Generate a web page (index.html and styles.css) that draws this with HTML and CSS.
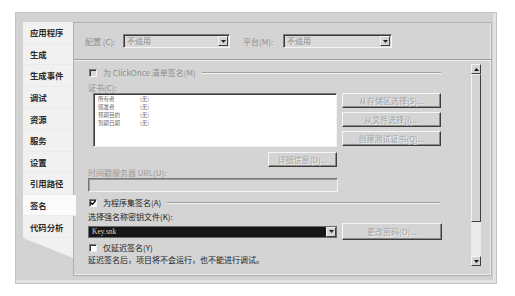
FILE: index.html
```html
<!DOCTYPE html>
<html>
<head>
<meta charset="utf-8">
<link rel="stylesheet" href="styles.css">
</head>
<body>
<div class="window">
  <div class="tabs">
    <div class="tab">应用程序</div>
    <div class="tab">生成</div>
    <div class="tab">生成事件</div>
    <div class="tab">调试</div>
    <div class="tab">资源</div>
    <div class="tab">服务</div>
    <div class="tab">设置</div>
    <div class="tab">引用路径</div>
    <div class="tab active">签名</div>
    <div class="tab">代码分析</div>
    <div class="tab-slant"></div>
  </div>
  <div class="panel">
    <div class="topbar">
      <span class="lbl dis lbl-cfg">配置 (C):</span>
      <div class="combo dis-combo c1"><span class="combo-text">不适用</span><span class="dd"><svg width="5" height="3" viewBox="0 0 5 3"><path d="M0 0H5L2.5 3Z" fill="#222"/></svg></span></div>
      <span class="lbl dis lbl-plat">平台(M):</span>
      <div class="combo dis-combo c2"><span class="combo-text">不适用</span><span class="dd"><svg width="5" height="3" viewBox="0 0 5 3"><path d="M0 0H5L2.5 3Z" fill="#222"/></svg></span></div>
    </div>
    <div class="sep"></div>
    <div class="scrollarea">
      <div class="form">
        <div class="chkrow">
          <span class="cb cb-dis"></span>
          <span class="txt dis">为 ClickOnce 清单签名(M)</span>
          <span class="gline gl1"></span>
        </div>
        <div class="lblrow dis">证书(C):</div>
        <div class="certrow">
          <div class="certbox">
            <div class="certline"><span class="ck">所有者</span><span>(无)</span></div>
            <div class="certline"><span class="ck">颁发者</span><span>(无)</span></div>
            <div class="certline"><span class="ck">预期目的</span><span>(无)</span></div>
            <div class="certline"><span class="ck">到期日期</span><span>(无)</span></div>
          </div>
          <div class="btncol">
            <div class="btn">从存储区选择(S)...</div>
            <div class="btn">从文件选择(I)...</div>
            <div class="btn">创建测试证书(Q)...</div>
          </div>
        </div>
        <div class="detrow"><div class="btn btn-det">详细信息(D)...</div></div>
        <div class="lblrow urllbl dis">时间戳服务器 URL(U):</div>
        <div class="textbox"></div>
        <div class="chkrow chk2">
          <span class="cb"><svg width="6" height="6" viewBox="0 0 6 6"><path d="M0.5 2.5L2.3 4.3L5.5 1" stroke="#000" stroke-width="1.3" fill="none"/></svg></span>
          <span class="txt">为程序集签名(A)</span>
          <span class="gline gl2"></span>
        </div>
        <div class="lblrow keylbl">选择强名称密钥文件(K):</div>
        <div class="keyrow">
          <div class="keycombo"><span class="keytext">Key.snk</span><span class="dd dd-key"><svg width="5" height="3" viewBox="0 0 5 3"><path d="M0 0H5L2.5 3Z" fill="#222"/></svg></span></div>
          <div class="btn btn-pwd">更改密码(O)...</div>
        </div>
        <div class="chkrow chk3">
          <span class="cb"></span>
          <span class="txt">仅延迟签名(Y)</span>
        </div>
        <div class="note">延迟签名后，项目将不会运行，也不能进行调试。</div>
      </div>
      <div class="vscroll">
        <div class="sbtn"><svg width="5" height="3" viewBox="0 0 5 3"><path d="M0 3H5L2.5 0Z" fill="#111"/></svg></div>
        <div class="thumb"></div>
        <div class="track"></div>
        <div class="sbtn"><svg width="5" height="3" viewBox="0 0 5 3"><path d="M0 0H5L2.5 3Z" fill="#111"/></svg></div>
      </div>
    </div>
  </div>
</div>
</body>
</html>
```
FILE: styles.css
```css
html, body {
  margin: 0;
  padding: 0;
  background: #ffffff;
}
body {
  width: 515px;
  height: 296px;
  overflow: hidden;
  font-family: "Noto Sans CJK SC", "Noto Sans", sans-serif;
  font-size: 8px;
  color: #1e1e1e;
}
.window {
  margin: 12px 0 0 15px;
  width: 482px;
  height: 272px;
  box-sizing: border-box;
  background: #d2d2d2;
  border: 1px solid #c2c2c2;
  box-shadow: inset -3px -3px 0 #e2e2e2;
  padding: 8px 4px 7px 7px;
  display: flex;
  align-items: flex-start;
}
.tabs {
  width: 50px;
  margin-top: 1px;
  display: flex;
  flex-direction: column;
  flex-shrink: 0;
}
.tab {
  height: 21.6px;
  box-sizing: border-box;
  background: #f1f1f1;
  padding-left: 7px;
  display: flex;
  align-items: center;
  font-size: 8.4px;
  font-weight: 700;
  color: #2a2a2a;
  white-space: nowrap;
  border-bottom: 1px solid #ebebeb;
}
.tab.active {
  background: #fbfbfb;
  width: 53px;
  position: relative;
  z-index: 1;
}
.tab-slant {
  height: 20px;
  background: #f1f1f1;
  clip-path: polygon(0 0, 100% 0, 100% 100%);
}
.panel {
  flex: 1;
  margin-top: 1px;
  height: 254px;
  box-sizing: border-box;
  background: #d4d4d4;
  border: 1px solid #b0b0b0;
  box-shadow: inset -1px -1px 0 #ececec;
  display: flex;
  flex-direction: column;
}
.topbar {
  height: 36px;
  flex-shrink: 0;
  display: flex;
  align-items: center;
  padding-left: 11px;
}
.dis {
  color: #8e8e8e;
}
.lbl {
  white-space: nowrap;
}
.lbl-cfg { width: 38px; }
.lbl-plat { width: 40px; margin-left: 13px; }
.combo {
  height: 14px;
  box-sizing: border-box;
  border: 1px solid;
  border-color: #7a7a7a #f4f4f4 #f4f4f4 #7a7a7a;
  box-shadow: inset 1px 1px 0 #3a3a3a;
  display: flex;
  align-items: center;
  justify-content: space-between;
}
.dis-combo { background: #dadada; }
.c1 { width: 107px; }
.c2 { width: 109px; }
.combo-text {
  color: #8a8a8a;
  padding-left: 3px;
  line-height: 1;
}
.dd {
  width: 10px;
  height: 10px;
  box-sizing: border-box;
  border: 1px solid;
  border-color: #f4f4f4 #404040 #404040 #f4f4f4;
  background: #d4d4d4;
  margin-right: 1px;
  display: flex;
  align-items: center;
  justify-content: center;
}
.sep {
  flex-shrink: 0;
  border-top: 1px solid #9c9c9c;
  border-bottom: 1px solid #efefef;
}
.scrollarea {
  flex: 1;
  display: flex;
  min-height: 0;
}
.form {
  flex: 1;
  padding: 6px 0 0 14px;
  display: flex;
  flex-direction: column;
}
.chkrow {
  height: 12px;
  display: flex;
  align-items: center;
  flex-shrink: 0;
}
.cb {
  width: 8px;
  height: 8px;
  box-sizing: border-box;
  margin-left: 1px;
  border: 1px solid;
  border-color: #7a7a7a #f4f4f4 #f4f4f4 #7a7a7a;
  box-shadow: inset 1px 1px 0 #3a3a3a;
  background: #ffffff;
  display: flex;
  align-items: center;
  justify-content: center;
  flex-shrink: 0;
}
.cb-dis { background: #d8d8d8; }
.txt {
  margin-left: 6px;
  white-space: nowrap;
  line-height: 1;
}
.gline {
  flex: 1;
  height: 0;
  border-top: 1px solid #a2a2a2;
  border-bottom: 1px solid #f2f2f2;
}
.gl1 { margin: 0 30px 0 6px; }
.gl2 { margin: 0 31px 0 6px; }
.lblrow {
  height: 12px;
  margin-top: 2px;
  display: flex;
  align-items: center;
  white-space: nowrap;
  flex-shrink: 0;
}
.certrow {
  height: 54px;
  display: flex;
  flex-shrink: 0;
}
.certbox {
  width: 244px;
  margin-left: 5px;
  box-sizing: border-box;
  background: #ffffff;
  border: 1px solid;
  border-color: #7a7a7a #f4f4f4 #f4f4f4 #7a7a7a;
  box-shadow: inset 1px 1px 0 #3a3a3a;
  padding: 1px 0 0 4px;
  color: #6a6a6a;
  font-size: 5.5px;
}
.certline {
  height: 8px;
  line-height: 8px;
  display: flex;
  white-space: nowrap;
}
.ck { width: 42px; }
.btncol {
  width: 99px;
  margin-left: 5px;
  display: flex;
  flex-direction: column;
  gap: 4px;
}
.btn {
  height: 15px;
  box-sizing: border-box;
  border: 1px solid;
  border-color: #f6f6f6 #3c3c3c #3c3c3c #f6f6f6;
  box-shadow: inset -1px -1px 0 #8a8a8a;
  background: #d4d4d4;
  color: #a2a2a2;
  text-shadow: 1px 1px 0 #f4f4f4;
  display: flex;
  align-items: center;
  justify-content: center;
  white-space: nowrap;
  line-height: 1;
  flex-shrink: 0;
}
.detrow {
  margin-top: 5px;
  height: 15px;
  display: flex;
  flex-shrink: 0;
}
.btn-det {
  width: 69px;
  margin-left: 180px;
}
.urllbl {
  margin-top: 0;
  height: 11px;
  color: #9a9a9a;
}
.textbox {
  width: 250px;
  height: 14px;
  box-sizing: border-box;
  background: #d6d6d6;
  border: 1px solid;
  border-color: #7a7a7a #f4f4f4 #f4f4f4 #7a7a7a;
  box-shadow: inset 1px 1px 0 #9a9a9a;
  flex-shrink: 0;
}
.chk2 { margin-top: 5px; }
.keylbl { margin-top: 1px; }
.keyrow {
  margin-top: 1px;
  height: 17px;
  display: flex;
  align-items: center;
  flex-shrink: 0;
}
.keycombo {
  width: 249px;
  height: 12px;
  box-sizing: border-box;
  background: #161616;
  border: 1px solid #6a6a6a;
  display: flex;
  align-items: center;
  justify-content: space-between;
}
.keytext {
  color: #d8d8d8;
  padding-left: 3px;
  font-family: "Liberation Serif", serif;
  font-size: 7.5px;
  line-height: 1;
}
.dd-key {
  height: 10px;
  margin-right: 0;
}
.btn-pwd {
  width: 100px;
  height: 17px;
  margin-left: 5px;
}
.chk3 { margin-top: 2px; }
.note {
  height: 12px;
  margin-top: -1px;
  display: flex;
  align-items: center;
  white-space: nowrap;
  flex-shrink: 0;
}
.vscroll {
  width: 10px;
  margin: 3px 10px 9px 0;
  display: flex;
  flex-direction: column;
  flex-shrink: 0;
}
.sbtn {
  height: 10px;
  box-sizing: border-box;
  border: 1px solid;
  border-color: #f4f4f4 #404040 #404040 #f4f4f4;
  background: #d4d4d4;
  display: flex;
  align-items: center;
  justify-content: center;
  flex-shrink: 0;
}
.thumb {
  height: 148px;
  box-sizing: border-box;
  border: 1px solid;
  border-color: #f4f4f4 #404040 #404040 #f4f4f4;
  background: #d4d4d4;
  flex-shrink: 0;
}
.track {
  flex: 1;
  background: #ebebeb;
}
```
